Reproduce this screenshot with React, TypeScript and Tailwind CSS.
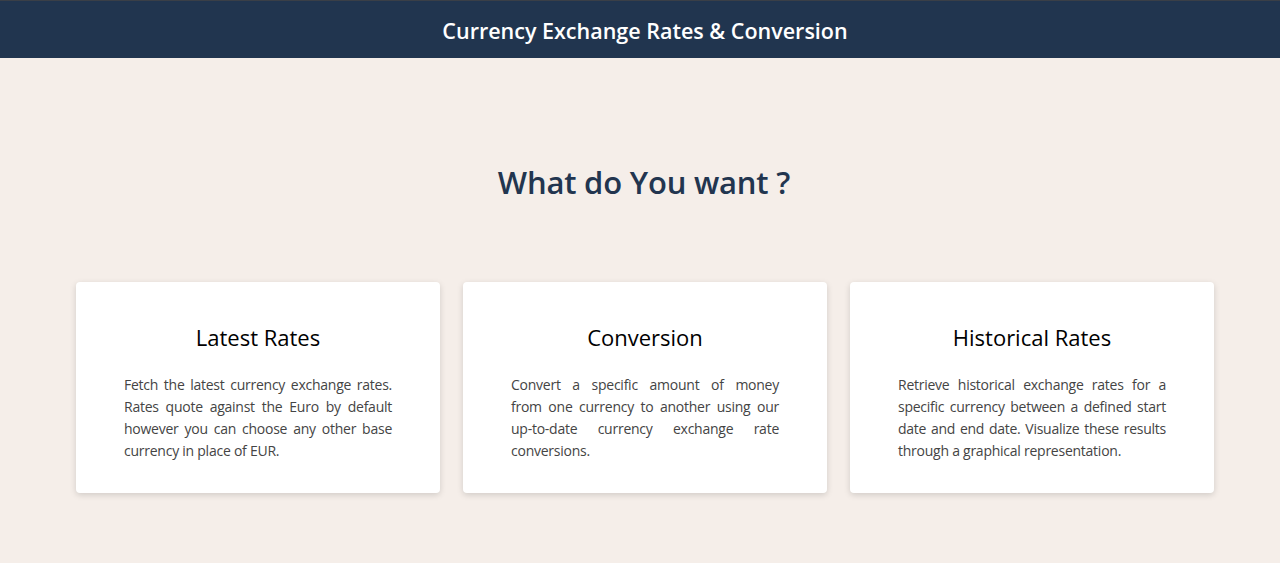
const options = [
  {
    title: 'Latest Rates',
    lines: [
      'Fetch the latest currency exchange rates.',
      'Rates quote against the Euro by default',
      'however you can choose any other base',
      'currency in place of EUR.',
    ],
  },
  {
    title: 'Conversion',
    lines: [
      'Convert a specific amount of money',
      'from one currency to another using our',
      'up-to-date currency exchange rate',
      'conversions.',
    ],
  },
  {
    title: 'Historical Rates',
    lines: [
      'Retrieve historical exchange rates for a',
      'specific currency between a defined start',
      'date and end date. Visualize these results',
      'through a graphical representation.',
    ],
  },
];

export default function App() {
  return (
    <div className="min-h-[563px] bg-[#f5eee9] font-['Open_Sans',sans-serif]">
      <header className="h-[58px] bg-[#21354f] border-t border-[#3a3f47] flex items-center justify-center">
        <h1 className="text-[21.5px] font-semibold text-white pt-[3px] pl-[10px]">
          Currency Exchange Rates &amp; Conversion
        </h1>
      </header>

      <main className="pt-[102px]">
        <h2 className="text-center text-[31px] font-semibold text-[#22354f] leading-[44px] tracking-[-0.2px] pl-[8px]">
          What do You want ?
        </h2>

        <div className="mt-[78px] pl-[76px] grid grid-cols-[364px_364px_364px] gap-[23px]">
          {options.map((o) => (
            <div
              key={o.title}
              className="h-[211px] bg-white rounded-[4px] shadow-[0_2px_6px_rgba(0,0,0,0.15)] px-[48px] pt-[39px]"
            >
              <h3 className="text-center text-[22px] font-medium text-black leading-[32px]">{o.title}</h3>
              <p className="mt-[21px] text-[14px] leading-[22px] text-[#444] tracking-[-0.25px]">
                {o.lines.map((l, i) => (
                  <span
                    key={i}
                    className={
                      i < o.lines.length - 1
                        ? 'block whitespace-nowrap text-justify [text-align-last:justify]'
                        : 'block whitespace-nowrap'
                    }
                  >
                    {l}
                  </span>
                ))}
              </p>
            </div>
          ))}
        </div>
      </main>
    </div>
  );
}
